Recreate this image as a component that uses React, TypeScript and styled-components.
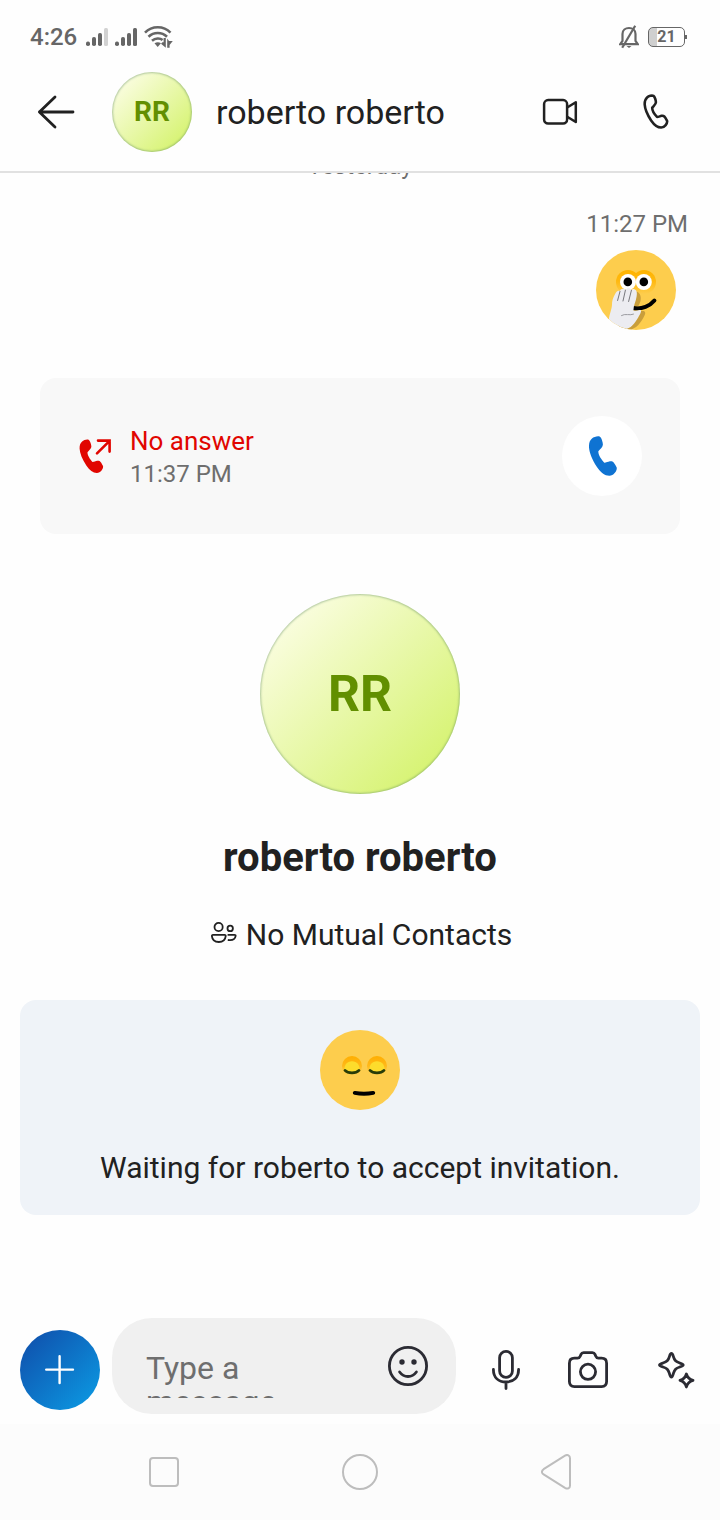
import React from 'react';
import styled, { createGlobalStyle } from 'styled-components';

const GlobalStyle = createGlobalStyle`
  *, *::before, *::after { box-sizing: border-box; }
  body {
    margin: 0;
    background: #fefefe;
    color: #212121;
    font-family: Roboto, "Noto Sans", sans-serif;
  }
  h1, h2, p { margin: 0; font-weight: 400; }
  svg { display: block; flex: none; }
`;

const Screen = styled.div`
  display: flex;
  flex-direction: column;
  min-height: 100vh;
`;

const StatusBar = styled.div`
  display: flex;
  align-items: center;
  justify-content: space-between;
  padding: 22px 32px 0 30px;
  color: #666;
`;

const StatusGroup = styled.div<{ $gap: number }>`
  display: flex;
  align-items: center;
  gap: ${(p) => p.$gap}px;
  height: 30px;
`;

const Signals = styled.div`
  display: flex;
  gap: 6px;
  padding-left: 3px;
`;

const Clock = styled.time`
  font-size: 24px;
  line-height: 32px;
  font-weight: 500;
`;

const Battery = styled.div`
  position: relative;
  display: flex;
  align-items: center;
  justify-content: center;
  width: 37px;
  height: 20px;
  margin-right: 3px;
  border: 1px solid #666;
  border-radius: 5px;
  background: linear-gradient(90deg, #cfcfcf 8px, transparent 8px);
  font-size: 16px;
  line-height: 18px;
  font-weight: 700;
  &::after {
    content: '';
    position: absolute;
    right: -3px;
    width: 2px;
    height: 4px;
    background: #666;
  }
`;

const Header = styled.header`
  display: flex;
  align-items: center;
  height: 121px;
  padding: 0 24px 0 16px;
  border-bottom: 2px solid #e1e1e1;
`;

const IconButton = styled.button<{ $width?: number }>`
  display: flex;
  flex: none;
  align-items: center;
  justify-content: center;
  width: ${(p) => p.$width ?? 80}px;
  height: 80px;
  padding: 0;
  border: 0;
  background: none;
  color: inherit;
  cursor: pointer;
`;

const BackButton = styled(IconButton)`
  margin-right: 16px;
`;

const HeaderActions = styled.div`
  display: flex;
  gap: 16px;
`;

const Avatar = styled.div<{ $size: number; $font: number }>`
  display: flex;
  flex: none;
  align-items: center;
  justify-content: center;
  width: ${(p) => p.$size}px;
  height: ${(p) => p.$size}px;
  border-radius: 50%;
  background: linear-gradient(135deg, #fafde0 12%, #d6f371 88%);
  box-shadow: inset 0 0 2px 1px rgba(96, 140, 96, 0.45);
  color: #628f00;
  font-size: ${(p) => p.$font}px;
  font-weight: 700;
`;

const HeaderName = styled.h1`
  flex: 1;
  min-width: 0;
  padding-left: 24px;
  font-size: 34px;
  line-height: 40px;
  white-space: nowrap;
  overflow: hidden;
  text-overflow: ellipsis;
`;

const Conversation = styled.main`
  display: flex;
  flex: 1;
  flex-direction: column;
  overflow: hidden;
`;

const DayLabel = styled.p`
  margin-top: -21px;
  color: #6e6e6e;
  font-size: 24px;
  line-height: 28px;
  text-align: center;
`;

const SentMessage = styled.article`
  display: flex;
  flex-direction: column;
  align-items: flex-end;
  gap: 12px;
  padding: 30px 44px 0;
`;

const Time = styled.time<{ $outset?: boolean }>`
  margin-right: ${(p) => (p.$outset ? -12 : 0)}px;
  color: #6e6e6e;
  font-size: 24px;
  line-height: 28px;
`;

const CallCard = styled.article`
  display: flex;
  align-items: center;
  height: 156px;
  margin: 48px 40px 0;
  padding: 0 38px;
  border-radius: 16px;
  background: #f8f8f8;
`;

const CallText = styled.div`
  display: flex;
  flex: 1;
  flex-direction: column;
  gap: 3px;
  padding-left: 18px;
`;

const CallStatus = styled.p`
  color: #e10600;
  font-size: 26px;
  line-height: 32px;
`;

const CallBack = styled(IconButton)`
  padding-left: 2px;
  border-radius: 50%;
  background: #fff;
`;

const Profile = styled.section`
  display: flex;
  flex-direction: column;
  align-items: center;
  padding-top: 60px;
`;

const ProfileName = styled.h2`
  margin-top: 40px;
  font-size: 40px;
  line-height: 48px;
  font-weight: 700;
`;

const Mutual = styled.p`
  display: flex;
  align-items: flex-start;
  gap: 9px;
  margin-top: 35px;
  padding-left: 3px;
  font-size: 30px;
  line-height: 36px;
  svg { margin-top: 5px; }
`;

const Invitation = styled.section`
  display: flex;
  flex-direction: column;
  align-items: center;
  gap: 40px;
  margin: 47px 20px 40px;
  padding: 30px 20px 29px;
  border-radius: 16px;
  background: #eff3f8;
  font-size: 30px;
  line-height: 36px;
  text-align: center;
`;

const Composer = styled.form`
  display: flex;
  align-items: flex-end;
  padding: 0 0 10px 20px;
  color: #2b2b33;
`;

const AddButton = styled(IconButton)`
  margin: 0 12px 4px 0;
  border-radius: 50%;
  background: linear-gradient(135deg, #0f55b0 12%, #0c93de 88%);
`;

const MessageField = styled.div`
  display: flex;
  flex: 1;
  align-items: center;
  min-width: 0;
  height: 96px;
  padding: 0 8px 0 34px;
  border-radius: 40px;
  background: #f0f0f0;
`;

const MessageInput = styled.textarea`
  flex: 1;
  min-width: 0;
  height: 47px;
  margin-top: 17px;
  padding: 0;
  border: 0;
  outline: 0;
  resize: none;
  overflow: hidden;
  background: none;
  color: #212121;
  font: 400 32px/34px Roboto, "Noto Sans", sans-serif;
  &::placeholder { color: #6e6e6e; opacity: 1; }
`;

const ComposerTools = styled.div`
  display: flex;
  margin: 0 0 4px 10px;
`;

const EffectsButton = styled(IconButton)`
  padding-left: 2px;
`;

const SystemNav = styled.nav`
  display: flex;
  height: 96px;
  padding: 0 66px;
  background: #fcfcfc;
`;

const NavButton = styled.button`
  display: flex;
  flex: 1;
  align-items: center;
  justify-content: center;
  padding: 0;
  border: 0;
  background: none;
  color: #bdbdbd;
  cursor: pointer;
`;

const PHONE =
  'M3 2.5C5 .7 9 -.4 11 .6C12.6 1.6 14 6.4 14 8.4C14 11 11.5 12.6 9.4 15.2C9.2 19 12.6 23.8 15.4 26.8C17.4 26.8 19 25.8 21 25.4C24 24.9 25 26 27.9 31.6C28.6 34.8 25 39.8 20.6 40C16 40.1 12 37 8 31.2C3 23.6 .3 16.4 0 11.2C-.1 7 .6 4.6 3 2.5Z';

function Signal({ weak = false }: { weak?: boolean }) {
  return (
    <svg width="23" height="20" viewBox="0 0 23 20" fill="#666" aria-hidden="true">
      <rect x="0" y="14.6" width="4" height="4.4" rx="1.8" />
      <rect x="6" y="10" width="4" height="9" rx="1.8" />
      <rect x="12" y="6" width="4" height="13" rx="1.8" />
      <rect x="18" y="1" width="4" height="18" rx="1.5" fill={weak ? '#d2d2d2' : '#666'} />
    </svg>
  );
}

function Wifi() {
  return (
    <svg width="30" height="24" viewBox="0 0 30 24" fill="none" stroke="#666" strokeWidth="2.6" aria-hidden="true">
      <path d="M1 7.6C8 .5 19.5 .5 26.5 7.6" />
      <path d="M4.5 11.8C9.7 6.7 17.8 6.7 23 11.8" />
      <path d="M8 15.8C11.4 12.8 16 12.8 18.6 15" />
      <path d="M10.5 18.3C12.6 16.9 15 16.9 17 18.3L13.7 22Z" fill="#666" stroke="none" />
      <path d="M21.8 13V22.8L17 18.8L18.4 17.2H19.6V13ZM23.2 22.8V13.4L25 16H28.8L25.6 20V22.8Z" fill="#666" stroke="none" />
    </svg>
  );
}

function BellOff() {
  return (
    <svg width="20" height="24" viewBox="0 0 20 24" fill="none" stroke="#666" strokeWidth="2.2" aria-hidden="true">
      <path d="M1.2 19.2H18.8L16.5 16V9C16.5 5 13.6 3 10 3S3.5 5 3.5 9V16Z" />
      <path d="M16.2 .8L3.2 22.8" />
      <path d="M7.5 21H12.5L10 23Z" fill="#666" stroke="none" />
    </svg>
  );
}

function Phone({ width, height, filled }: { width: number; height: number; filled?: string }) {
  return filled ? (
    <svg width={width} height={height} viewBox="0 0 28.2 40" aria-hidden="true">
      <path d={PHONE} fill={filled} />
    </svg>
  ) : (
    <svg width={width} height={height} viewBox="-1.8 -1.8 31.8 43.6" fill="none" aria-hidden="true">
      <path d={PHONE} stroke="#212121" strokeWidth="3.2" strokeLinejoin="round" />
    </svg>
  );
}

function MissedCall() {
  return (
    <svg width="34" height="36" viewBox="0 0 34 36" aria-hidden="true">
      <path d={PHONE} fill="#e10600" transform="translate(1.6 1.4) scale(.84)" />
      <path d="M19 15.4L31.6 2.8M20 2.6H31.6V13.6" fill="none" stroke="#e10600" strokeWidth="2.6" strokeLinecap="round" />
    </svg>
  );
}

function GigglingFace() {
  return (
    <svg width="80" height="80" viewBox="0 0 80 80" role="img" aria-label="Giggling emoji">
      <defs>
        <linearGradient id="lid" x1="0" y1="0" x2="0" y2="1">
          <stop offset="0" stopColor="#ffb400" />
          <stop offset=".45" stopColor="#ffb80f" />
          <stop offset="1" stopColor="#fdcd4d" />
        </linearGradient>
        <clipPath id="face"><circle cx="40" cy="40" r="40" /></clipPath>
      </defs>
      <g clipPath="url(#face)">
        <rect width="80" height="80" fill="#fdcd4d" />
        <circle cx="32" cy="32" r="12" fill="url(#lid)" />
        <circle cx="48" cy="32" r="12" fill="url(#lid)" />
        <circle cx="32" cy="32" r="8" fill="#fff" />
        <circle cx="47.8" cy="32" r="8" fill="#fff" />
        <circle cx="31.8" cy="31.9" r="4.3" />
        <circle cx="47.8" cy="31.9" r="4.3" />
        <path d="M38 42C42 40 46 45 44.5 51C43 56 40 59 40 61H47C49 61 50 63 48.5 65.5C45 73 40 79 33 80H22V60Z" fill="#c99e3b" />
        <path d="M37 58C46 59.6 54 56 58.4 50.6" fill="none" stroke="#000" strokeWidth="4" strokeLinecap="round" />
        <path d="M16 55C16 49 18.5 45 20 42.5C21 40.8 22.8 40.4 23.8 41C24.6 39.4 25.8 38.6 27 38.7C28.2 38.6 29 39.2 29.4 39.8C30.4 38.4 31.6 38 33 38.2C34.3 38.3 35.2 39.2 35.4 40C36.2 39 37.2 38.8 38.4 39.2C41 40.2 41.2 43 40.6 46.5C40 51.5 37.5 55 37.4 60.4C40 61.5 42.5 59.4 44.5 60C46.2 60.7 44 64.4 42.2 67.5C39 73 35 79 28 79.3C22 79.5 17 78 13 71.5C12.4 66 15.5 61 16 55Z" fill="#ececf1" />
        <path d="M21.6 50.5L24 41.4M27 51L29.4 40.2M32.6 51.5L35.4 40.4" fill="none" stroke="#77777c" strokeWidth="1" strokeLinecap="round" />
        <path d="M25.5 65.5C29 63.2 34 65.8 37.5 64.2" fill="none" stroke="#9a9aa0" strokeWidth="1" strokeLinecap="round" />
      </g>
    </svg>
  );
}

function SleepyFace() {
  return (
    <svg width="80" height="80" viewBox="0 0 80 80" role="img" aria-label="Waiting emoji">
      <defs>
        <linearGradient id="brow" x1="0" y1="0" x2="0" y2="1">
          <stop offset="0" stopColor="#ffae00" />
          <stop offset=".5" stopColor="#ffb91a" />
          <stop offset=".9" stopColor="#fdcd4d" />
        </linearGradient>
      </defs>
      <circle cx="40" cy="40" r="40" fill="#fdcd4d" />
      {[32, 57].map((cx) => (
        <g key={cx} transform={`translate(${cx} 36)`}>
          <circle r="10" fill="url(#brow)" />
          <path d="M-7.4 4C-8 -1 -5 -4.8 0 -4.8S8 -1 7.4 4C4 7.6 -4 7.6 -7.4 4Z" fill="#fddc2c" />
          <path d="M-7 4.4C-4 7.6 4 7.6 7 4.4" fill="none" stroke="#283c08" strokeWidth="2.8" strokeLinecap="round" />
        </g>
      ))}
      <path d="M34.8 62.9C41 64 47 64 53.2 62.9" fill="none" stroke="#000" strokeWidth="4" strokeLinecap="round" />
    </svg>
  );
}

function People() {
  return (
    <svg width="26" height="22" viewBox="0 0 26 22" fill="none" stroke="#212121" strokeWidth="1.8" aria-hidden="true">
      <circle cx="7.6" cy="5" r="4.1" />
      <circle cx="19.2" cy="6.4" r="2.7" />
      <path d="M2 12.8H13.6C14.4 12.8 14.8 13.4 14.7 14.2C14.3 18.2 11.6 20 7.8 20S1.3 18.2 .9 14.2C.8 13.4 1.2 12.8 2 12.8Z" />
      <path d="M16.6 12.8H23.4C24.3 12.8 24.8 13.4 24.6 14.2C24 17.6 20.6 18.6 16.8 18" />
    </svg>
  );
}

export default function App() {
  return (
    <Screen>
      <GlobalStyle />
      <StatusBar>
        <StatusGroup $gap={6}>
          <Clock>4:26</Clock>
          <Signals>
            <Signal weak />
            <Signal />
          </Signals>
          <Wifi />
        </StatusGroup>
        <StatusGroup $gap={9}>
          <BellOff />
          <Battery>21</Battery>
        </StatusGroup>
      </StatusBar>

      <Header>
        <BackButton type="button" aria-label="Back">
          <svg width="38" height="34" viewBox="0 0 38 34" fill="none" stroke="#212121" strokeWidth="2.8" strokeLinecap="round" strokeLinejoin="round">
            <path d="M18 2L2.4 17L18 32M2.4 17H36" />
          </svg>
        </BackButton>
        <Avatar $size={80} $font={28}>RR</Avatar>
        <HeaderName>roberto roberto</HeaderName>
        <HeaderActions>
          <IconButton type="button" aria-label="Video call">
            <svg width="36" height="28" viewBox="0 0 36 28" fill="none" stroke="#212121" strokeWidth="2.5" strokeLinejoin="round">
              <rect x="2.1" y="2.1" width="23" height="23.4" rx="4" />
              <path d="M25.2 9.5L33.8 4.2V24L25.2 18.7" />
            </svg>
          </IconButton>
          <IconButton type="button" aria-label="Voice call">
            <Phone width={26} height={35} />
          </IconButton>
        </HeaderActions>
      </Header>

      <Conversation>
        <DayLabel>Yesterday</DayLabel>
        <SentMessage>
          <Time $outset>11:27 PM</Time>
          <GigglingFace />
        </SentMessage>

        <CallCard>
          <MissedCall />
          <CallText>
            <CallStatus>No answer</CallStatus>
            <Time>11:37 PM</Time>
          </CallText>
          <CallBack type="button" aria-label="Call back">
            <Phone width={28} height={40} filled="#0f73d2" />
          </CallBack>
        </CallCard>

        <Profile>
          <Avatar $size={200} $font={50}>RR</Avatar>
          <ProfileName>roberto roberto</ProfileName>
          <Mutual>
            <People />
            No Mutual Contacts
          </Mutual>
        </Profile>

        <Invitation>
          <SleepyFace />
          <p>Waiting for roberto to accept invitation.</p>
        </Invitation>
      </Conversation>

      <Composer onSubmit={(e) => e.preventDefault()}>
        <AddButton type="button" aria-label="Add">
          <svg width="30" height="30" viewBox="0 0 30 30" stroke="#fff" strokeWidth="2.4" strokeLinecap="round">
            <path d="M14.6 1.2V28M1.2 14.6H28" />
          </svg>
        </AddButton>
        <MessageField>
          <MessageInput aria-label="Message" placeholder="Type a message" />
          <IconButton type="button" aria-label="Emoji">
            <svg width="40" height="40" viewBox="0 0 40 40" fill="none" stroke="currentColor" strokeWidth="2.8" strokeLinecap="round">
              <circle cx="20" cy="20" r="18.6" />
              <circle cx="14" cy="16" r="2.7" fill="currentColor" stroke="none" />
              <circle cx="26" cy="16" r="2.7" fill="currentColor" stroke="none" />
              <path d="M11.6 26C16 32 24 32 28.4 26" />
            </svg>
          </IconButton>
        </MessageField>
        <ComposerTools>
          <IconButton type="button" aria-label="Record voice message">
            <svg width="28" height="40" viewBox="0 0 28 40" fill="none" stroke="currentColor" strokeWidth="2.8" strokeLinecap="round">
              <rect x="7.6" y="1.4" width="12.8" height="26" rx="6.4" />
              <path d="M1.4 19.5C1.4 27.5 6.5 32 14 32S26.6 27.5 26.6 19.5M14 32V38.6" />
            </svg>
          </IconButton>
          <IconButton type="button" $width={84} aria-label="Camera">
            <svg width="40" height="38" viewBox="0 0 40 38" fill="none" stroke="currentColor" strokeWidth="2.8" strokeLinejoin="round">
              <path d="M6.4 7.2H9.5C11 7.2 11.7 6.4 12.2 5.2L13 3.4C13.6 2 14.2 1.6 15.6 1.6H24.4C25.8 1.6 26.4 2 27 3.4L27.8 5.2C28.3 6.4 29 7.2 30.5 7.2H33.6C36.8 7.2 38.6 9 38.6 12.2V30.6C38.6 33.8 36.8 35.6 33.6 35.6H6.4C3.2 35.6 1.4 33.8 1.4 30.6V12.2C1.4 9 3.2 7.2 6.4 7.2Z" />
              <circle cx="20" cy="20.8" r="7.6" />
            </svg>
          </IconButton>
          <EffectsButton type="button" $width={90} aria-label="Effects">
            <svg width="37" height="37" viewBox="0 0 37 37" fill="none" stroke="currentColor" strokeWidth="2.8" strokeLinejoin="round">
              <path d="M13.4 1.5C14.6 1.5 14.8 2.6 15.4 4.6C16.6 8.6 17.8 9.8 21.8 11C23.8 11.6 25.2 12 25.2 13S23.8 14.4 21.8 15C17.8 16.2 16.6 17.4 15.4 21.4C14.8 23.4 14.6 25 13.4 25S12 23.4 11.4 21.4C10.2 17.4 9 16.2 5 15C3 14.4 1.5 14 1.5 13S3 11.6 5 11C9 9.8 10.2 8.6 11.4 4.6C12 2.6 12.2 1.5 13.4 1.5Z" />
              <path d="M28.4 22C29.4 25.4 31.2 27.4 35 28.4C31.2 29.4 29.4 31.4 28.4 35C27.4 31.4 25.6 29.4 22 28.4C25.6 27.4 27.4 25.4 28.4 22Z" />
            </svg>
          </EffectsButton>
        </ComposerTools>
      </Composer>

      <SystemNav>
        <NavButton type="button" aria-label="Recent apps">
          <svg width="30" height="30" viewBox="0 0 30 30" fill="none" stroke="currentColor" strokeWidth="2">
            <rect x="1" y="1" width="28" height="28" rx="3" />
          </svg>
        </NavButton>
        <NavButton type="button" aria-label="Home">
          <svg width="36" height="36" viewBox="0 0 36 36" fill="none" stroke="currentColor" strokeWidth="2">
            <circle cx="18" cy="18" r="17" />
          </svg>
        </NavButton>
        <NavButton type="button" aria-label="Back">
          <svg width="30" height="36" viewBox="0 0 30 36" fill="none" stroke="currentColor" strokeWidth="2">
            <path d="M24 1.6C26.5 .2 29 1.4 29 4.2V31.8C29 34.6 26.5 35.2 24 33.8L2.6 20.4C.4 19 .4 16.8 2.6 15.2Z" />
          </svg>
        </NavButton>
      </SystemNav>
    </Screen>
  );
}
